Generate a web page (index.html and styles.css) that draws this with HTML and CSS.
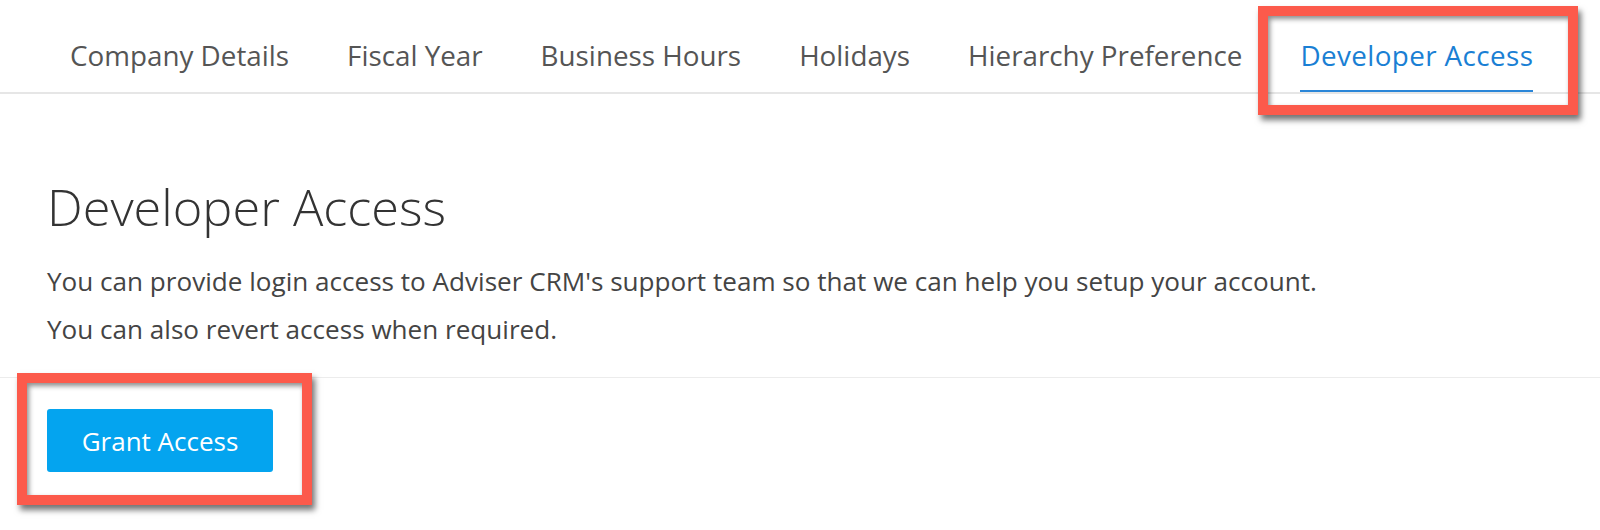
FILE: index.html
```html
<!DOCTYPE html>
<html lang="en">
<head>
<meta charset="utf-8">
<title>Developer Access</title>
<link rel="stylesheet" href="styles.css">
</head>
<body>
<div class="page">
  <nav class="tabs">
    <a class="tab">Company Details</a>
    <a class="tab">Fiscal Year</a>
    <a class="tab">Business Hours</a>
    <a class="tab">Holidays</a>
    <a class="tab">Hierarchy Preference</a>
    <a class="tab tab-active">Developer Access</a>
  </nav>
  <div class="mark mark-tab"></div>

  <section class="intro">
    <h1 class="title">Developer Access</h1>
    <p class="desc">You can provide login access to Adviser CRM's support team so that we can help you setup your account.<br>You can also revert access when required.</p>
  </section>

  <div class="actions">
    <button class="btn-primary">Grant Access</button>
  </div>
  <div class="mark mark-btn"></div>
</div>
</body>
</html>
```
FILE: styles.css
```css
html, body {
  margin: 0;
  padding: 0;
  background: #ffffff;
}
body {
  font-family: "Open Sans", "Lato", sans-serif;
  color: #333;
}
.page {
  position: relative;
  width: 1600px;
  height: 530px;
  overflow: hidden;
}
.tabs {
  display: flex;
  gap: 58px;
  padding-left: 70px;
  height: 92px;
  border-bottom: 2px solid #e6e6e6;
  box-sizing: content-box;
}
.tab {
  display: block;
  font-size: 27.8px;
  line-height: 32px;
  padding-top: 39px;
  color: #555;
  white-space: nowrap;
}
.tab-active {
  color: #1a7fd4;
  border-bottom: 2px solid #2b86d8;
  height: 51px;
  margin-bottom: -1px;
  letter-spacing: 0.4px;
}
.intro {
  padding: 83px 47px 0;
}
.title {
  margin: 0;
  font-size: 50.5px;
  font-weight: 300;
  line-height: 60px;
  color: #333;
}
.desc {
  margin: 20px 0 0;
  font-size: 26.1px;
  line-height: 48px;
  color: #444;
}
.actions {
  margin-top: 24px;
  border-top: 1px solid #ececec;
  padding: 31px 47px 0;
}
.btn-primary {
  width: 226px;
  height: 63px;
  border: 0;
  border-radius: 3px;
  background: #04a4ef;
  color: #fff;
  font-family: inherit;
  font-size: 26px;
  font-weight: 500;
  padding: 0;
}
.mark {
  position: absolute;
  border: 10px solid #fc5a4b;
  box-shadow: 3px 5px 6px rgba(0, 0, 0, 0.55), inset 2px 3px 5px rgba(0, 0, 0, 0.45);
  box-sizing: border-box;
}
.mark-tab {
  left: 1258px;
  top: 6px;
  width: 320px;
  height: 109px;
}
.mark-btn {
  left: 17px;
  top: 373px;
  width: 295px;
  height: 132px;
}
```
